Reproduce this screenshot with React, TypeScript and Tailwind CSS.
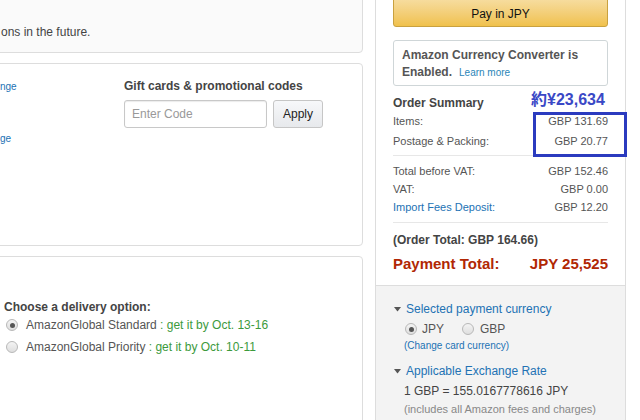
import React from "react";

function Radio({ checked }: { checked?: boolean }) {
  return (
    <span className="inline-flex h-[12px] w-[12px] items-center justify-center rounded-full border border-[#b8b8b8] bg-gradient-to-b from-[#f4f4f4] to-[#dedede]">
      {checked ? <span className="h-[5px] w-[5px] rounded-full bg-[#555]" /> : null}
    </span>
  );
}

function Caret() {
  return (
    <svg width="7" height="5" viewBox="0 0 7 5" className="mr-[5px]">
      <path d="M0 0 L7 0 L3.5 4.5 Z" fill="#555" />
    </svg>
  );
}

function Row({ label, value, link }: { label: string; value: string; link?: boolean }) {
  return (
    <div className="flex h-[18px] items-center justify-between text-[11px]">
      <span className={link ? "text-[#2272b4]" : "text-[#555]"}>{label}</span>
      <span className="text-[#555]">{value}</span>
    </div>
  );
}

export default function App() {
  return (
    <div
      className="relative h-[420px] w-[640px] overflow-hidden bg-white text-[#333]"
      style={{ fontFamily: '"Liberation Sans", Arial, sans-serif' }}
    >
      <div className="flex">
        {/* Left column */}
        <div className="-ml-[20px] -mt-[40px] flex w-[383px] flex-col gap-[10px]">
          <div className="flex h-[93px] flex-col justify-end rounded-[4px] border border-[#dddddd] bg-[#fafafa] pb-[12px] pl-[20px]">
            <div className="text-[12px] leading-[16px] text-[#444]">ons in the future.</div>
          </div>
          <div className="flex h-[183px] rounded-[4px] border border-[#dddddd] bg-white pl-[19px] pt-[14px]">
            <div className="flex w-[124px] flex-col">
              <div className="mt-[2px] text-[10px] leading-[14px] text-[#2272b4]">nge</div>
              <div className="mt-[38px] text-[10px] leading-[14px] text-[#2272b4]">ge</div>
            </div>
            <div className="flex flex-col">
              <div className="text-[12px] font-bold leading-[16px] text-[#444]">Gift cards &amp; promotional codes</div>
              <div className="mt-[6px] flex gap-[6px]">
                <div className="flex h-[28px] w-[143px] items-center rounded-[3px] border border-[#c8c8c8] pl-[7px] text-[12px] text-[#999] shadow-[inset_0_1px_1px_rgba(0,0,0,0.08)]">
                  Enter Code
                </div>
                <div className="flex h-[28px] w-[50px] items-center justify-center rounded-[3px] border border-[#c6c6c6] bg-gradient-to-b from-[#f7f8fa] to-[#e7e9ec] text-[12px] text-[#222]">
                  Apply
                </div>
              </div>
            </div>
          </div>
          <div className="h-[200px] rounded-[4px] border border-[#dddddd] bg-white pl-[23px] pt-[42px]">
            <div className="text-[12px] font-bold leading-[16px] text-[#444]">Choose a delivery option:</div>
            <div className="mt-[0px] flex h-[20px] items-center text-[12px]">
              <span className="ml-[2px] flex">
                <Radio checked />
              </span>
              <span className="ml-[8px] text-[#555]">AmazonGlobal Standard</span>
              <span className="text-[#3c9a3c]">&nbsp;: get it by Oct. 13-16</span>
            </div>
            <div className="mt-[2px] flex h-[20px] items-center text-[12px]">
              <span className="ml-[2px] flex">
                <Radio />
              </span>
              <span className="ml-[8px] text-[#555]">AmazonGlobal Priority</span>
              <span className="text-[#3c9a3c]">&nbsp;: get it by Oct. 10-11</span>
            </div>
          </div>
        </div>

        {/* Right column */}
        <div className="-mt-[10px] ml-[12px] flex h-[440px] w-[251px] flex-col border-x border-[#dddddd]">
          <div className="bg-white px-[17px] pb-[11px] pt-[6px]">
            <div className="flex h-[31px] items-center justify-center rounded-[3px] border border-[#c9a13f] bg-gradient-to-b from-[#f7dfa5] to-[#f0c14b] pt-[4px] text-[12px] text-[#111]">
              Pay in JPY
            </div>
            <div className="mt-[13px] h-[46px] rounded-[3px] border border-[#cfd6d8] bg-white px-[8px] pt-[6px] text-[12px] font-bold leading-[17px] text-[#555]">
              Amazon Currency Converter is
              <br />
              Enabled.<span className="ml-[7px] text-[10px] font-normal text-[#2a86b8]">Learn more</span>
            </div>
            <div className="mt-[9px] text-[12px] font-bold leading-[16px] text-[#444]">Order Summary</div>
            <div className="flex h-[20px] items-center justify-between text-[11px] text-[#555]">
              <span>Items:</span>
              <span>GBP 131.69</span>
            </div>
            <div className="flex h-[20px] items-center justify-between text-[11px] text-[#555]">
              <span>Postage &amp; Packing:</span>
              <span>GBP 20.77</span>
            </div>
            <div className="mt-[4px] h-px bg-[#e7e7e7]" />
            <div className="mt-[6px]">
              <Row label="Total before VAT:" value="GBP 152.46" />
              <Row label="VAT:" value="GBP 0.00" />
              <Row label="Import Fees Deposit:" value="GBP 12.20" link />
            </div>
            <div className="mt-[6px] h-px bg-[#e7e7e7]" />
            <div className="mt-[9px] text-[12px] font-bold leading-[16px] text-[#444]">(Order Total: GBP 164.66)</div>
            <div className="mt-[6px] flex h-[20px] items-center justify-between text-[15px] font-bold text-[#b12704]">
              <span>Payment Total:</span>
              <span>JPY 25,525</span>
            </div>
          </div>
          <div className="flex-1 border-t border-[#dddddd] bg-[#f3f3f3] pl-[18px] pt-[15px]">
            <div className="flex h-[16px] items-center text-[12px] text-[#2272b4]">
              <Caret />
              Selected payment currency
            </div>
            <div className="ml-[11px] mt-[4px] flex h-[16px] items-center text-[12px] text-[#555]">
              <Radio checked />
              <span className="ml-[5px]">JPY</span>
              <span className="ml-[18px] flex">
                <Radio />
              </span>
              <span className="ml-[6px]">GBP</span>
            </div>
            <div className="ml-[10px] mt-[2px] text-[10px] leading-[14px] text-[#2272b4]">(Change card currency)</div>
            <div className="mt-[10px] flex h-[16px] items-center text-[12px] text-[#2272b4]">
              <Caret />
              Applicable Exchange Rate
            </div>
            <div className="ml-[10px] mt-[4px] text-[12px] leading-[16px] text-[#444]">1 GBP = 155.0167778616 JPY</div>
            <div className="ml-[10px] mt-[3px] text-[11px] leading-[14px] text-[#888]">(includes all Amazon fees and charges)</div>
          </div>
        </div>
      </div>

      {/* Annotations */}
      <div className="absolute left-[531px] top-[90px] text-[16px] font-bold leading-[20px] text-[#3a48c6]" style={{ fontFamily: '"Liberation Sans", "Noto Sans CJK JP", sans-serif' }}>
        約¥23,634
      </div>
      <div className="absolute left-[533px] top-[112px] h-[45px] w-[94px] border-[3px] border-[#2b3bbf]" />
    </div>
  );
}
